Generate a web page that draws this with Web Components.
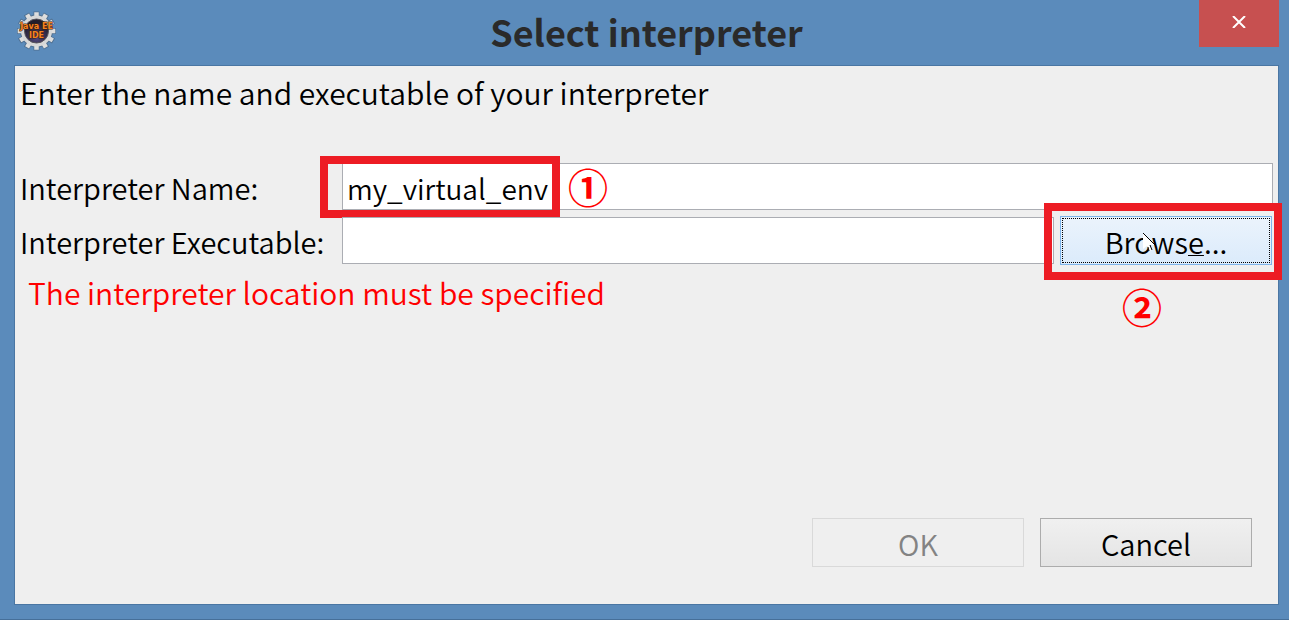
<!DOCTYPE html>
<html lang="en">
<head>
<meta charset="utf-8">
<meta name="viewport" content="width=device-width">
<title>Select interpreter</title>
<style>
  html, body { margin: 0; height: 100%; }
  body { font: 350 30px/40px "Noto Sans CJK KR", "Noto Sans", sans-serif; color: #000; }
</style>
</head>
<body>
<dialog-window>
  <gear-icon slot="icon"></gear-icon>
  <span slot="title">Select interpreter</span>
  <interpreter-form></interpreter-form>
</dialog-window>

<script>
const define = (name, html) => customElements.define(name, class extends HTMLElement {
  constructor() {
    super();
    this.attachShadow({ mode: 'open' }).innerHTML = html;
  }
});

define('gear-icon', `
<style>
  :host { display: block; width: 40px; height: 40px; }
  svg { display: block; width: 100%; height: 100%; }
  text { font: bold 8px "DejaVu Sans", sans-serif; fill: #f58220; stroke: #3a1c08; stroke-width: 1px; paint-order: stroke; text-anchor: middle; }
</style>
<svg viewBox="0 0 40 40" role="img" aria-label="Java EE IDE">
  <defs><radialGradient id="g" cx="50%" cy="80%" r="65%"><stop offset="0" stop-color="#51467c"/><stop offset="1" stop-color="#211d2c"/></radialGradient></defs>
  <g stroke="#4f6f90" stroke-width="6"><path d="M20.500 .500V39.500M1 20H40M10.500 3L30.500 37M30.500 3L10.500 37M3.500 10L37.500 30M3.500 30L37.500 10"/></g>
  <circle cx="20.500" cy="20" r="16.500" fill="#4f6f90"/>
  <g stroke="#dedede" stroke-width="4.500"><path d="M20.500 1.200V38.800M1.700 20H39.300M11.100 3.700L29.900 36.300M29.900 3.700L11.100 36.300M4.200 10.600L36.800 29.400M4.200 29.400L36.800 10.600"/></g>
  <circle cx="20.500" cy="20" r="15.500" fill="#d8d8d8"/>
  <circle cx="20.500" cy="20" r="12" fill="url(#g)" stroke="#57545c"/>
  <text x="20.500" y="18">Java EE</text>
  <text x="20.500" y="27">IDE</text>
</svg>`);

define('dialog-window', `
<style>
  :host { display: flex; flex-direction: column; box-sizing: border-box; min-height: 100%; padding: 0 10px 14px 14px; background: #5b8bbb; border-bottom: 1px solid #466f99; }
  header { display: grid; grid-template-columns: 1fr auto 1fr; height: 65px; }
  .icon { padding: 11px 2px; }
  h1 { margin: 0; padding-top: 9px; font-size: 36px; line-height: 44px; font-weight: 700; color: #2a2a2a; }
  button { justify-self: end; display: grid; place-items: center; width: 80px; height: 47px; padding: 0 0 3px; border: 0; background: #c75050; }
  main { display: flex; flex: 1; border: 1px solid #4a76a3; background: #efefef; }
  ::slotted(interpreter-form) { flex: 1; }
</style>
<header>
  <div class="icon"><slot name="icon"></slot></div>
  <h1><slot name="title"></slot></h1>
  <button aria-label="Close"><svg width="14" height="12" viewBox="0 0 14 12"><path d="M1 0L13 12M13 0L1 12" stroke="#fff" stroke-width="2"/></svg></button>
</header>
<main><slot></slot></main>`);

define('push-button', `
<style>
  :host { display: block; width: 212px; }
  button { display: block; box-sizing: border-box; width: 100%; height: 49px; padding: 0; border: 1px solid #acacac; background: linear-gradient(#f0f0f0, #e4e4e4); font: inherit; font-size: 29px; color: #000; }
  :host([disabled]) button { border-color: #d9d9d9; background: #efefef; color: #838383; }
  :host([hot]) button { border-color: #7eb4ea; background: linear-gradient(#ebf3fc, #dbebfb); outline: 1px dotted #000; outline-offset: -3px; }
  ::slotted(u) { text-decoration-thickness: 1px; }
</style>
<button><slot></slot></button>`);

define('red-frame', `
<style>
  :host { display: block; box-sizing: border-box; position: absolute; border: 8px solid #ed1c24; pointer-events: none; }
</style>`);

define('step-mark', `
<style>
  :host { display: block; position: absolute; font-size: 40px; line-height: 40px; font-weight: 700; color: #f00; pointer-events: none; }
</style>
<slot></slot>`);

define('mouse-pointer', `
<style>
  :host { display: block; position: absolute; pointer-events: none; }
  svg { display: block; }
</style>
<svg width="14" height="20" viewBox="0 0 14 20"><path d="M0 0V16L4 13L6 18L9 17L7 12H12Z" fill="#fff"/><path d="M0 0L12 12M5 14L6 18M7 12L9 17" stroke="#000" fill="none"/></svg>`);

define('interpreter-form', `
<style>
  :host { display: flex; }
  form { flex: 1; display: flex; flex-direction: column; margin: 0; padding: 6px 5px 37px; }
  p { margin: 0; }
  .fields { display: grid; grid-template-columns: 322px 1fr 213px; row-gap: 5px; align-items: center; margin-top: 50px; }
  label { font-size: 29px; }
  .field { position: relative; display: flex; align-items: center; height: 49px; }
  .name { grid-column: 2 / 4; }
  .exe { margin-right: 6px; }
  input { flex: 1; min-width: 0; box-sizing: border-box; height: 47px; margin: 0; padding: 2px 4px 0; border: 1px solid #abadb3; border-radius: 0; background: #fff; font: inherit; font-size: 28px; color: #000; outline: 0; }
  .browse { position: relative; width: 212px; }
  .error { margin: 7px 0 0 8px; color: #f00; }
  .actions { display: flex; justify-content: flex-end; gap: 16px; margin-top: auto; padding-right: 21px; }
  .name red-frame { left: -22px; top: -6px; width: 240px; height: 62px; }
  .name step-mark { left: 226px; top: 4px; }
  .browse red-frame { inset: -13px -10px -15px -16px; z-index: 1; }
  .browse step-mark { left: 62px; top: 70px; }
  mouse-pointer { left: 83px; top: 17px; }
</style>
<form onsubmit="return false">
  <p>Enter the name and executable of your interpreter</p>
  <div class="fields">
    <label for="name">Interpreter Name:</label>
    <div class="field name"><input id="name" value="my_virtual_env"><red-frame></red-frame><step-mark>①</step-mark></div>
    <label for="exe">Interpreter Executable:</label>
    <div class="field exe"><input id="exe"></div>
    <div class="browse"><push-button hot>Brows<u>e</u>...</push-button><red-frame></red-frame><step-mark>②</step-mark><mouse-pointer></mouse-pointer></div>
  </div>
  <p class="error" role="alert">The interpreter location must be specified</p>
  <div class="actions"><push-button disabled>OK</push-button><push-button>Cancel</push-button></div>
</form>`);
</script>
</body>
</html>
